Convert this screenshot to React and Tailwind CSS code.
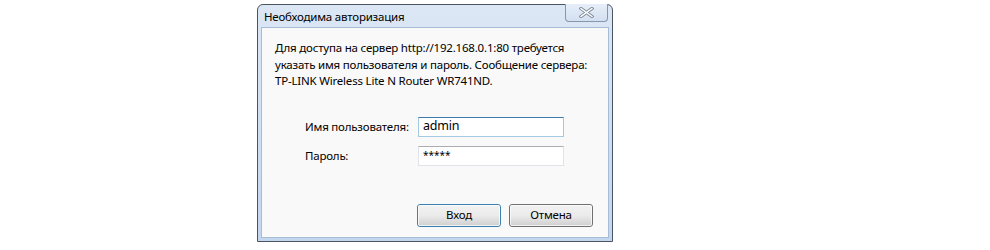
import React from 'react';

const font = { fontFamily: '"Noto Sans", "Open Sans", "Liberation Sans", sans-serif' };

function CloseGlyph() {
  return (
    <svg width="15" height="11" viewBox="0 0 15 11" className="block">
      <path d="M2 1.5 L13 9.5 M13 1.5 L2 9.5" stroke="#7c8796" strokeWidth="3.2" strokeLinecap="square" fill="none" />
      <path d="M2 1.5 L13 9.5 M13 1.5 L2 9.5" stroke="#ffffff" strokeWidth="1.4" strokeLinecap="square" fill="none" />
    </svg>
  );
}

function Field({ label, value, focused }) {
  return (
    <div className="flex items-center">
      <div className="w-[113px] text-[11.5px] tracking-[-0.2px] text-black leading-none whitespace-nowrap">{label}</div>
      <div
        className={
          focused
            ? 'w-[146px] h-[20px] border border-[#a4c9e3] border-t-[#3d7bad] bg-white flex items-center pl-[4px] text-[12.5px] tracking-[-0.2px] text-black'
            : 'w-[146px] h-[20px] border border-[#e2e3ea] border-t-[#abadb3] bg-white flex items-start pt-[1px] pl-[4px] text-[10px] leading-[14px] text-black'
        }
      >
        {value}
      </div>
    </div>
  );
}

function Button({ children, primary }) {
  return (
    <div
      className={
        (primary ? 'border-[#3c7fb1] ' : 'border-[#707070] ') +
        'w-[84px] h-[23px] border rounded-[3px] bg-gradient-to-b from-[#f2f2f2] via-[#ebebeb] to-[#cfcfcf] flex items-center justify-center text-[11.5px] tracking-[-0.2px] text-black'
      }
    >
      <div className="w-full h-full rounded-[2px] border border-white/70 flex items-center justify-center">{children}</div>
    </div>
  );
}

export default function App() {
  return (
    <div className="w-[990px] h-[250px] bg-white overflow-hidden" style={font}>
      <div className="ml-[257px] mt-[4px] w-[356px] h-[238px] border border-[#4b5461] rounded-t-[6px] bg-gradient-to-b from-[#dce7f5] to-[#c4d6ee] flex flex-col">
        <div className="h-[22px] shrink-0 flex items-start justify-between pl-[6px] pr-[4px]">
          <div className="text-[11.5px] tracking-[-0.2px] text-black leading-none pt-[6px] whitespace-nowrap">Необходима авторизация</div>
          <div className="w-[43px] h-[18px] -mt-px border border-[#8696ab] border-t-0 rounded-b-[4px] bg-gradient-to-b from-[#e6eef8] to-[#d3e0f1] flex items-center justify-center">
            <CloseGlyph />
          </div>
        </div>
        <div className="flex-1 mx-[3px] mb-[3px] border border-[#a7bcd6] bg-[#f9f9f9] flex flex-col">
          <div className="pl-[13px] pt-[12px] text-[11.5px] tracking-[-0.2px] leading-[16.5px] text-black whitespace-nowrap">
            <p>Для доступа на сервер http://192.168.0.1:80 требуется</p>
            <p>указать имя пользователя и пароль. Сообщение сервера:</p>
            <p>TP-LINK Wireless Lite N Router WR741ND.</p>
          </div>
          <div className="pl-[43px] mt-[27px] flex flex-col gap-[9px]">
            <Field label="Имя пользователя:" value="admin" focused />
            <Field label="Пароль:" value="*****" />
          </div>
          <div className="mt-[38px] pr-[15px] flex justify-end gap-[8px]">
            <Button primary>Вход</Button>
            <Button>Отмена</Button>
          </div>
        </div>
      </div>
    </div>
  );
}
